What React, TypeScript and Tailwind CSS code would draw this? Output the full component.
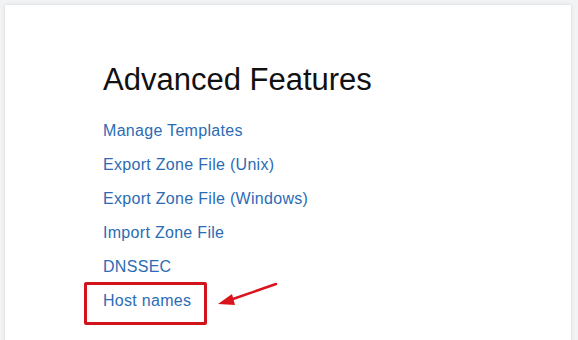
import React from "react";

const links = [
  "Manage Templates",
  "Export Zone File (Unix)",
  "Export Zone File (Windows)",
  "Import Zone File",
  "DNSSEC",
  "Host names",
];

export default function App() {
  return (
    <div className="w-[578px] h-[340px] bg-[#f2f3f5] pt-[5px] pl-[5px] pr-[7px] overflow-hidden" style={{ fontFamily: '"Liberation Sans", Arial, sans-serif' }}>
      <div className="relative h-[360px] bg-white shadow-[0_0_4px_rgba(0,0,0,0.12)] pl-[98px] pt-[57px]">
        <h1 className="text-[31px] leading-[36px] text-[#111] font-normal m-0">Advanced Features</h1>
        <ul className="mt-[16px] flex flex-col">
          {links.map((l) => (
            <li key={l} className="text-[16px] leading-[34px] tracking-[0.3px] text-[#2b6cb5]">
              <a href="#" className="no-underline">{l}</a>
            </li>
          ))}
        </ul>
        <div className="absolute left-[79px] top-[277px] w-[123px] h-[43px] border-[3px] border-[#d3131c] rounded-[2px]" />
        <svg className="absolute left-[205px] top-[272px]" width="80" height="40" viewBox="0 0 80 40">
          <line x1="66" y1="7" x2="20" y2="23" stroke="#d9141c" strokeWidth="2.5" strokeLinecap="round" />
          <polygon points="8,27 22,17 25,28" fill="#d9141c" />
        </svg>
      </div>
    </div>
  );
}
